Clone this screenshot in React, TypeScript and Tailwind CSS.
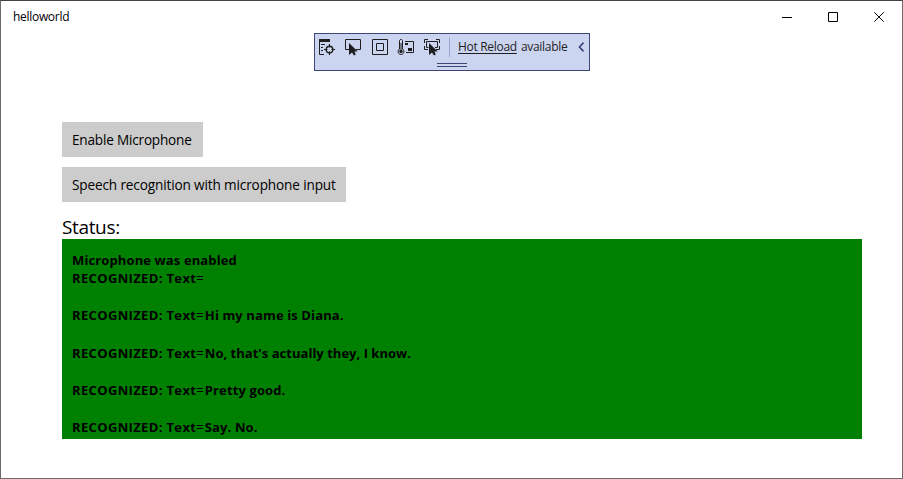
import React from "react";

const cursor = "M0 0V12L3 9.4L5 12.6L6.8 11.6L5.4 8.5H8.8Z";

function Icon({ children }: { children: React.ReactNode }) {
  return (
    <svg width="18" height="18" viewBox="0 0 18 18" fill="none" stroke="#1e1e1e" strokeWidth="1">
      {children}
    </svg>
  );
}

function DebugToolbar() {
  return (
    <div className="ml-[313px] h-[38px] w-[276px] border border-[#3c4679] bg-[#ccd5f0] text-[#1e1e1e]">
      <div className="flex h-[26px] items-center pl-[3px]">
        <div className="flex gap-2">
          <Icon>
            <path d="M1 1H12V4H1Z" fill="#1e1e1e" stroke="none" />
            <path d="M1.5 3V16.5H6M3 6.5H7M3 9.5H5M3 12.5H5" />
            <circle cx="11.5" cy="11.5" r="3.3" strokeWidth="1.4" />
            <path d="M11.5 6V9.5M11.5 13.5V17M6 11.5H9.5M13.5 11.5H17" strokeWidth="1.2" />
          </Icon>
          <Icon>
            <path d="M5 11.5H1.5V1.5H16.5V11.5H12" />
            <path d={cursor} transform="translate(5 5)" fill="#1e1e1e" stroke="none" />
          </Icon>
        </div>
        <div className="ml-[9px] flex gap-2">
          <Icon>
            <path d="M1.5 1.5H16.5V16.5H1.5ZM5.5 5.5H12.5V12.5H5.5Z" />
          </Icon>
          <Icon>
            <path d="M2.5 11V3C2.5 .9 5.5 .9 5.5 3V11C8.4 13.6 6.3 16.5 4 16.5S-.4 13.6 2.5 11Z" />
            <circle cx="4" cy="13.5" r="1.7" fill="#1e1e1e" stroke="none" />
            <path d="M4 5V13M8 3.5H16.5V14.5H9" />
            <path d="M8 5H11V7H8ZM11 10H15V13H11Z" fill="#1e1e1e" stroke="none" />
          </Icon>
          <Icon>
            <path d="M1.5 5V1.5H5M13 1.5H16.5V5M1.5 8V11.5H5M16.5 8V11.5H13" />
            <path d="M5.5 9.5H3.5V3.5H14.5V9.5H12" />
            <path d={cursor} transform="translate(6 5)" fill="#1e1e1e" stroke="none" />
          </Icon>
        </div>
        <div className="ml-2 h-5 w-px bg-[#98a7d3]" />
        <span className="ml-2 flex w-[112px] gap-[4px] whitespace-nowrap text-[12px] leading-4 tracking-[-0.3px]">
          <span className="underline underline-offset-2">Hot Reload</span>
          <span>available</span>
        </span>
        <svg className="ml-2" width="7" height="10" viewBox="0 0 7 10" fill="none" stroke="#3c4679" strokeWidth="1.7">
          <path d="M5.5 .7L1.5 5L5.5 9.3" />
        </svg>
      </div>
      <div className="ml-[122px] mt-[3px] h-[4px] w-[30px] border-y border-[#3c4679]" />
    </div>
  );
}

const log: { label?: string; text: string; tight?: boolean }[] = [
  { text: "Microphone was enabled" },
  { label: "RECOGNIZED: Text", text: "" },
  { text: "" },
  { label: "RECOGNIZED: Text", text: "Hi my name is Diana." },
  { text: "" },
  { label: "RECOGNIZED: Text", text: "No, that's actually they, I know.", tight: true },
  { text: "" },
  { label: "RECOGNIZED: Text", text: "Pretty good." },
  { text: "" },
  { label: "RECOGNIZED: Text", text: "Say. No." },
];

export default function App() {
  return (
    <div className="flex h-[479px] w-[903px] flex-col overflow-hidden border border-[#6b6b6b] border-t-[#444444] bg-white font-['Open_Sans','Noto_Sans',sans-serif] text-black">
      <header className="flex h-8 shrink-0 items-center pl-3">
        <span className="text-[12px] leading-4 tracking-[-0.3px]">helloworld</span>
        <div className="ml-auto flex">
          {["M0 5.5H10", "M.5 .5H9.5V9.5H.5Z", "M.3 .3L9.7 9.7M9.7 .3L.3 9.7"].map((d) => (
            <button key={d} className="flex h-8 w-[46px] items-center justify-center">
              <svg width="10" height="10" viewBox="0 0 10 10" fill="none" stroke="#000" strokeWidth="1">
                <path d={d} />
              </svg>
            </button>
          ))}
        </div>
      </header>
      <DebugToolbar />
      <main className="flex flex-col items-start pl-[61px] pt-[51px]">
        <button className="h-[35px] w-[141px] whitespace-nowrap bg-[#cccccc] pl-[10px] pt-[2px] text-left text-[13.6px] tracking-[-0.2px]">
          Enable Microphone
        </button>
        <button className="mt-[10px] h-[35px] w-[284px] whitespace-nowrap bg-[#cccccc] pl-[10px] pt-[2px] text-left text-[13.6px] tracking-[-0.14px]">
          Speech recognition with microphone input
        </button>
        <div className="mt-[10px] h-[27px] text-[19px] leading-[30px] tracking-[-0.35px]">Status:</div>
        <div className="h-[200px] w-[800px] overflow-hidden bg-[#008000] pl-[10px] pt-[11.5px] text-[13px] font-bold leading-[18.63px]">
          {log.map((line, i) => (
            <p key={i} className="h-[18.63px] whitespace-pre tracking-[0.12px]">
              {line.label && (
                <>
                  <span className="tracking-[0.35px]">{line.label}</span>
                  <span className="font-normal tracking-[1.1px]">=</span>
                </>
              )}
              <span className={line.tight ? "tracking-[0.02px]" : ""}>{line.text}</span>
            </p>
          ))}
        </div>
      </main>
    </div>
  );
}
